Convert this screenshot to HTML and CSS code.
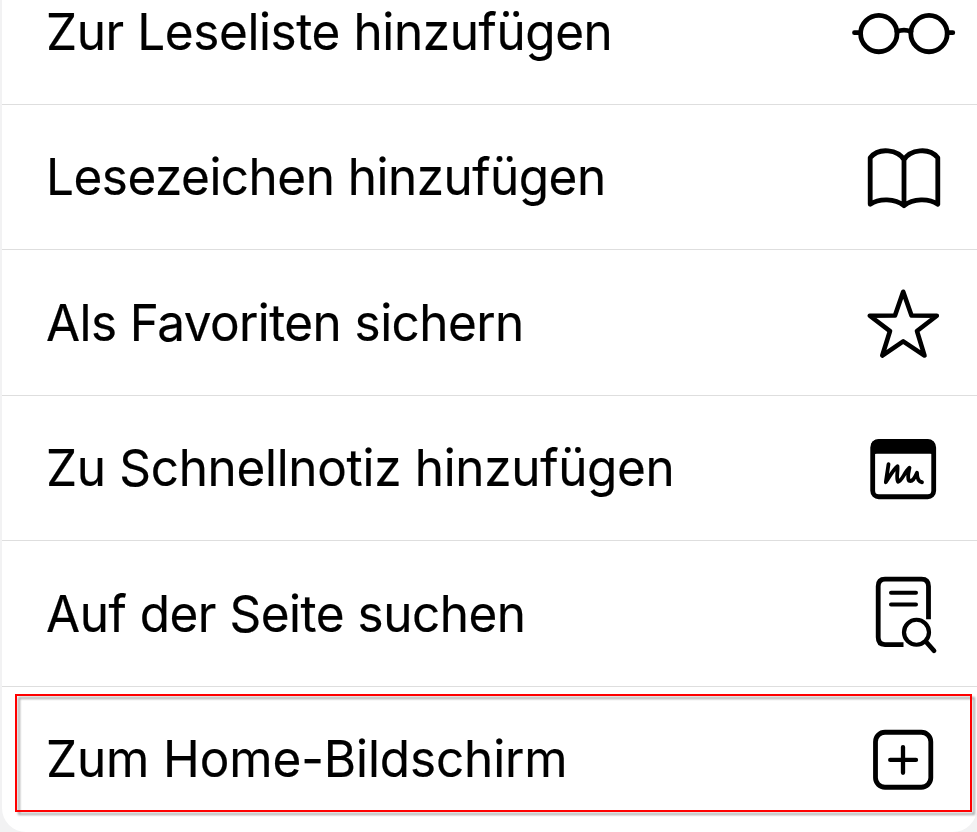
FILE: index.html
```html
<!DOCTYPE html>
<html lang="de">
<head>
<meta charset="utf-8">
<title>Teilen</title>
<link rel="stylesheet" href="styles.css">
</head>
<body>
<main class="sheet">
<ul class="actions">
<li class="action"><span class="label reading">Zur Leseliste hinzufügen</span>
<svg class="icon" viewBox="850 -13.25 110 90"><g class="stroke"><circle cx="878.8" cy="33.3" r="18.2"/><circle cx="929" cy="33.3" r="18.2"/><path d="M897 31.2Q904 28.4 911 31.2M860 32.4H854.5M948 32.4H952.8" stroke-width="4.8"/></g></svg></li>
<li class="action"><span class="label bookmark">Lesezeichen hinzufügen</span>
<svg class="icon" viewBox="850 131.75 110 90"><path class="stroke" d="M904 205.5V159.5C898 149.5 879 146.5 870.2 157.5V204C879 198 895 198 904 205.5C913 198 929 198 937.8 204V157.5C929 146.5 910 149.5 904 159.5"/></svg></li>
<li class="action"><span class="label favorite">Als Favoriten sichern</span>
<svg class="icon" viewBox="850 277.75 110 90"><path class="stroke star" d="M903.2 291.5L911.5 315.2L936.8 315.5L917 330.8L924.5 355.3L903.2 341.2L882.3 355.3L890 330.8L869.8 315.5L895 315.2Z"/></svg></li>
<li class="action"><span class="label note">Zu Schnellnotiz hinzufügen</span>
<svg class="icon" viewBox="850 423.25 110 90"><rect class="stroke" x="872.7" y="441.7" width="61" height="55.3" rx="6"/><path d="M871 454V446Q871 440 878 440H928Q935 440 935 446V458Q935 454 930 454H877Q872 454 872 458Z"/><path class="stroke scribble" d="M888.5 464.5L885.8 482.5C889 478 893 470 897.5 466.5C898 471 896 479 898 482C902 481.5 904 473 909.5 468C908.5 473 907 478 909 481C913 482.5 915 477 917 473C917 478 918.5 482 922 482.5"/></svg></li>
<li class="action"><span class="label find">Auf der Seite suchen</span>
<svg class="icon" viewBox="850 568.75 110 90"><g class="stroke"><path d="M903.5 644.3H885Q878.2 644.3 878.2 637V586Q878.2 578.8 885 578.8H921.5Q928.5 578.8 928.5 586V619" class="page"/><path d="M891 592.4H916M891 604.3H916" stroke-width="4"/><circle cx="916.5" cy="632" r="12.5" stroke-width="4.2"/><path d="M926 641.5L934 650.5"/></g></svg></li>
<li class="action"><span class="label home">Zum Home-Bildschirm</span>
<svg class="icon" viewBox="850 714.25 110 90"><g class="stroke"><rect x="875.5" y="732.5" width="55.3" height="55" rx="9.5"/><path d="M903 747.3V773M890.2 760.2H916" stroke-width="4.3"/></g></svg></li>
</ul>
</main>
<div class="highlight"></div>
</body>
</html>
```
FILE: styles.css
```css
body {
  margin: 0;
  height: 832px;
  overflow: hidden;
  background: #f2f2f3;
  font-family: Inter, "Liberation Sans", sans-serif;
}
.sheet {
  height: 832px;
  margin-left: 2px;
  overflow: hidden;
  background: #fff;
  border-radius: 0 0 24px 24px;
}
.actions {
  margin: -40.6px 0 0;
  padding: 0;
  list-style: none;
}
.action {
  box-sizing: border-box;
  height: 145.5px;
  display: flex;
  align-items: center;
  justify-content: space-between;
  padding: 0 17px 0 44px;
  border-bottom: 1px solid #dedede;
}
.action:last-child { border-bottom-color: transparent; }
.label {
  font-size: 51px;
  line-height: 60px;
  white-space: nowrap;
  color: #000;
  -webkit-text-stroke: 0.2px #000;
  transform: scaleX(0.97);
  transform-origin: left center;
}
.reading { letter-spacing: -0.42px; }
.bookmark { letter-spacing: -0.53px; }
.favorite { letter-spacing: -0.6px; }
.note { letter-spacing: -0.33px; }
.find { letter-spacing: -0.5px; }
.home { letter-spacing: -0.13px; }
.icon { width: 110px; height: 90px; flex: none; }
.stroke {
  fill: none;
  stroke: #000;
  stroke-width: 4.8;
  stroke-linecap: round;
  stroke-linejoin: round;
}
.star { stroke-width: 4.6; }
.scribble { stroke-width: 3.8; }
.page { stroke-linecap: butt; }
.highlight {
  position: absolute;
  left: 15px;
  top: 694px;
  width: 953px;
  height: 114px;
  border: 2px solid #f00;
  filter: drop-shadow(3px 3px 1px rgba(0, 0, 0, 0.35));
}
```
